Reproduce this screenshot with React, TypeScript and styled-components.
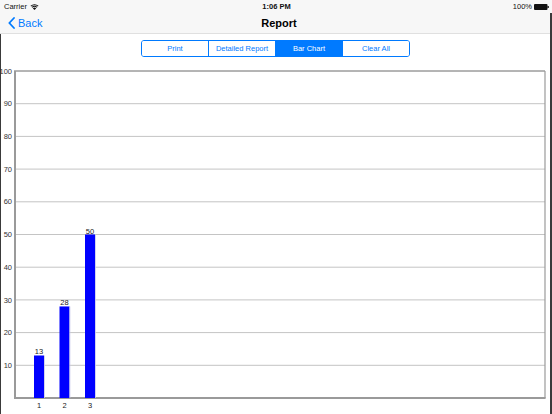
import React from "react";
import styled, { createGlobalStyle } from "styled-components";

const Global = createGlobalStyle`
  html, body { margin: 0; padding: 0; background: #fff; }
  body { font-family: "Liberation Sans", Arial, sans-serif; }
`;

const Screen = styled.div`
  width: 552px;
  height: 414px;
  display: flex;
  flex-direction: column;
  overflow: hidden;
  background: #fff;
`;

const StatusBar = styled.div`
  height: 13px;
  background: #f7f7f7;
  display: grid;
  grid-template-columns: 1fr auto 1fr;
  align-items: center;
  padding: 0 3px 0 4px;
  font-size: 7.5px;
  color: #111;
`;

const StatusLeft = styled.div`
  display: flex;
  align-items: center;
  gap: 3px;
`;

const StatusCenter = styled.div`
  font-weight: 600;
`;

const StatusRight = styled.div`
  display: flex;
  align-items: center;
  justify-content: flex-end;
  gap: 2px;
`;

const Body = styled.div`
  flex: 1;
  display: flex;
  flex-direction: column;
  border-right: 2px solid #3a3a3a;
`;

const NavBar = styled.div`
  height: 20px;
  background: #f7f7f7;
  border-bottom: 1px solid #e0e0e0;
  display: grid;
  grid-template-columns: 1fr auto 1fr;
  align-items: center;
  padding: 0 0 0 8px;
`;

const BackButton = styled.div`
  display: flex;
  align-items: center;
  gap: 3px;
  color: #007aff;
  font-size: 11px;
`;

const Title = styled.div`
  font-size: 11px;
  font-weight: 600;
  color: #000;
`;

const Content = styled.div`
  flex: 1;
  display: flex;
  flex-direction: column;
  align-items: center;
  border-left: 1px solid #3a3a3a;
`;

const Segmented = styled.div`
  margin-top: 6px;
  display: flex;
  width: 269px;
  height: 17px;
  box-sizing: border-box;
  border: 1px solid #007aff;
  border-radius: 3px;
  overflow: hidden;
`;

const Segment = styled.div<{ $active?: boolean }>`
  flex: 1;
  display: flex;
  align-items: center;
  justify-content: center;
  font-size: 7.5px;
  color: ${(p) => (p.$active ? "#fff" : "#007aff")};
  background: ${(p) => (p.$active ? "#007aff" : "#fff")};
  & + & { border-left: 1px solid #007aff; }
`;

const ChartArea = styled.svg`
  display: block;
  margin-top: 3px;
  align-self: flex-start;
  margin-left: -1px;
`;

const TOP = 11;
const BASE = 338;
const LEFT = 14;
const RIGHT = 545;
const scale = (BASE - TOP) / 100;

const bars = [
  { label: "1", value: 13, x: 34 },
  { label: "2", value: 28, x: 59.5 },
  { label: "3", value: 50, x: 85 },
];

function Chart() {
  const ticks = [10, 20, 30, 40, 50, 60, 70, 80, 90, 100];
  return (
    <ChartArea width={552} height={354} viewBox="0 0 552 354">
      {ticks.map((t) => {
        const y = BASE - t * scale;
        return (
          <g key={t}>
            <line
              x1={LEFT}
              x2={RIGHT}
              y1={y}
              y2={y}
              stroke={t === 100 ? "#6a6a6a" : "#c4c4c4"}
              strokeWidth={1}
            />
            <text
              x={12}
              y={y + 2.6}
              fontSize={7.5}
              textAnchor="end"
              fill="#333"
              fontFamily="Liberation Sans, Arial, sans-serif"
            >
              {t}
            </text>
          </g>
        );
      })}
      <line x1={RIGHT} x2={RIGHT} y1={TOP} y2={BASE} stroke="#9a9a9a" strokeWidth={1.2} />
      <line x1={LEFT + 1} x2={LEFT + 1} y1={TOP} y2={BASE + 1} stroke="#9a9a9a" strokeWidth={2} />
      <line x1={LEFT} x2={RIGHT + 0.6} y1={BASE} y2={BASE} stroke="#9a9a9a" strokeWidth={2} />
      {bars.map((b) => {
        const h = b.value * scale;
        const cx = b.x + 5;
        return (
          <g key={b.label}>
            <rect x={b.x} y={BASE - h} width={10} height={h} fill="#0000ff" />
            <rect x={b.x + 10} y={BASE - h} width={0.8} height={h} fill="#c8c8e8" />
            <text
              x={cx}
              y={BASE - h - 1}
              fontSize={7.5}
              textAnchor="middle"
              fill="#222"
              fontFamily="Liberation Sans, Arial, sans-serif"
            >
              {b.value}
            </text>
            <text
              x={cx}
              y={BASE + 10}
              fontSize={7.5}
              textAnchor="middle"
              fill="#222"
              fontFamily="Liberation Sans, Arial, sans-serif"
            >
              {b.label}
            </text>
          </g>
        );
      })}
    </ChartArea>
  );
}

function Wifi() {
  return (
    <svg width="9" height="7" viewBox="0 0 18 14">
      <path d="M9 14 L5.6 10.4 A5 5 0 0 1 12.4 10.4 Z" fill="#111" />
      <path d="M3.4 8.2 A8 8 0 0 1 14.6 8.2 L13.2 9.6 A6 6 0 0 0 4.8 9.6 Z" fill="#111" />
      <path d="M1 5.6 A11.5 11.5 0 0 1 17 5.6 L15.6 7 A9.5 9.5 0 0 0 2.4 7 Z" fill="#111" />
    </svg>
  );
}

function Battery() {
  return (
    <svg width="15" height="6" viewBox="0 0 15 6">
      <rect x="0" y="0" width="13.5" height="6" rx="1" fill="#111" />
      <rect x="13.5" y="2" width="1.3" height="2" fill="#111" />
    </svg>
  );
}

function Chevron() {
  return (
    <svg width="7" height="12" viewBox="0 0 7 12">
      <path d="M6 1 L1.3 6 L6 11" stroke="#007aff" strokeWidth="1.8" fill="none" strokeLinecap="round" strokeLinejoin="round" />
    </svg>
  );
}

export default function App() {
  return (
    <>
      <Global />
      <Screen>
        <StatusBar>
          <StatusLeft>
            <span>Carrier</span>
            <Wifi />
          </StatusLeft>
          <StatusCenter>1:06 PM</StatusCenter>
          <StatusRight>
            <span>100%</span>
            <Battery />
          </StatusRight>
        </StatusBar>
        <Body>
          <NavBar>
            <BackButton>
              <Chevron />
              <span>Back</span>
            </BackButton>
            <Title>Report</Title>
            <div />
          </NavBar>
          <Content>
            <Segmented>
              <Segment>Print</Segment>
              <Segment>Detailed Report</Segment>
              <Segment $active>Bar Chart</Segment>
              <Segment>Clear All</Segment>
            </Segmented>
            <Chart />
          </Content>
        </Body>
      </Screen>
    </>
  );
}
